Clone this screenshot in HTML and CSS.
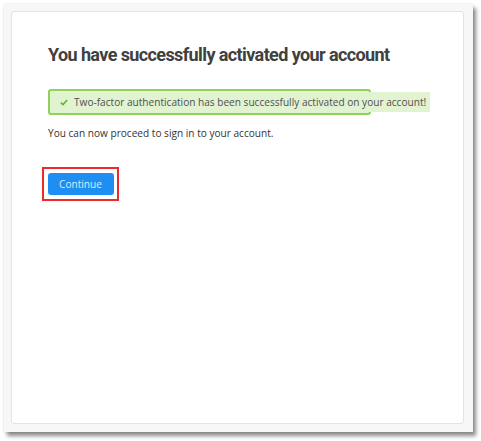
FILE: index.html
```html
<!DOCTYPE html>
<html lang="en">
<head>
<meta charset="utf-8">
<title>Account activated</title>
<link rel="stylesheet" href="styles.css">
</head>
<body>
<div class="frame">
  <div class="card">
    <h1 class="title">You have successfully activated your account</h1>
    <div class="alert">
      <span class="alert-text"><svg class="check" width="8" height="7" viewBox="0 0 8 7"><path d="M0.8 3.6 L3 5.6 L7.2 1" fill="none" stroke="#5cb82e" stroke-width="1.6"/></svg>Two-factor authentication has been successfully activated on your account!</span>
    </div>
    <p class="note">You can now proceed to sign in to your account.</p>
    <div class="highlight">
      <button class="btn">Continue</button>
    </div>
  </div>
</div>
</body>
</html>
```
FILE: styles.css
```css
html, body {
  margin: 0;
  padding: 0;
  background: #ffffff;
}
body {
  padding: 4px 0 0 4px;
  width: 481px;
  height: 441px;
  box-sizing: border-box;
}
.frame {
  width: 469px;
  height: 428px;
  box-sizing: border-box;
  background: #f7f7f7;
  padding: 7px 9px 8px 7px;
  box-shadow: 3px 4px 4px rgba(0,0,0,0.45), 0 0 2px rgba(0,0,0,0.12);
}
.card {
  height: 100%;
  box-sizing: border-box;
  background: #ffffff;
  border: 1px solid #e4e4e4;
  border-radius: 3px;
  padding: 31px 36px;
}
.title {
  margin: 0;
  font-family: Roboto, "Liberation Sans", sans-serif;
  font-weight: 700;
  font-size: 18px;
  line-height: 24px;
  letter-spacing: -0.6px;
  color: #404040;
  white-space: nowrap;
}
.alert {
  margin-top: 22px;
  width: 323px;
  height: 26px;
  box-sizing: border-box;
  border: 2px solid #8ed257;
  border-radius: 3px;
  background: #e1f3d0;
  display: flex;
  align-items: center;
  padding-left: 10px;
  white-space: nowrap;
}
.alert-text {
  display: flex;
  align-items: center;
  background: #e1f3d0;
  padding: 3px 4px 3px 0;
  font-family: "Open Sans", "Noto Sans", sans-serif;
  font-size: 10.1px;
  color: #505050;
}
.check {
  margin-right: 6px;
}
.note {
  margin: 11px 0 0;
  font-family: "Open Sans", "Noto Sans", sans-serif;
  font-size: 10.1px;
  color: #333333;
}
.highlight {
  margin-top: 27px;
  margin-left: -6px;
  width: 77px;
  height: 34px;
  box-sizing: border-box;
  border: 2.5px solid #ec2a2a;
  display: flex;
  align-items: center;
  justify-content: center;
}
.btn {
  width: 66px;
  height: 22px;
  border: none;
  border-radius: 3px;
  background: #1e8ff2;
  color: #d6ecff;
  font-family: "Open Sans", "Noto Sans", sans-serif;
  font-size: 10.1px;
  padding: 0;
}
```
